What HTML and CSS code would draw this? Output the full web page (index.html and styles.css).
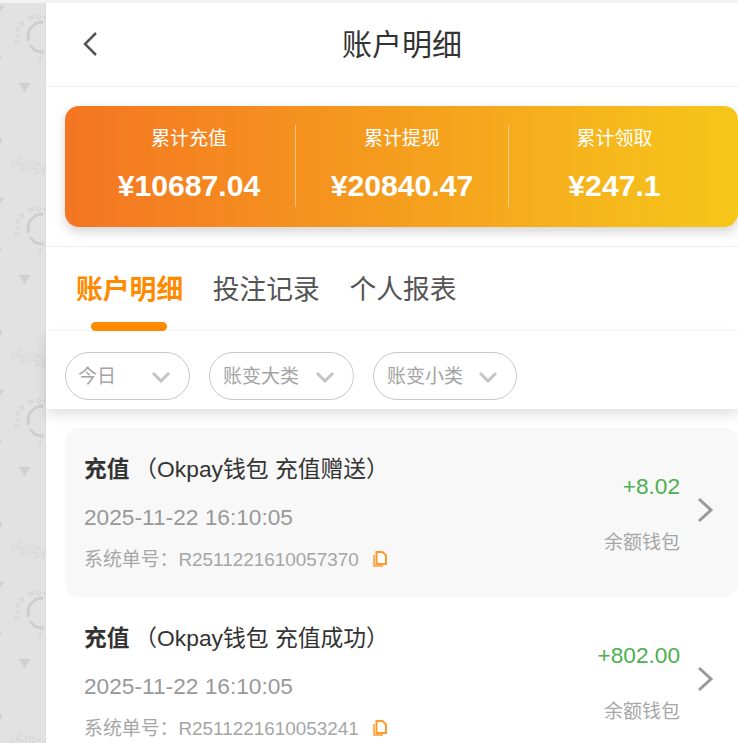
FILE: index.html
```
<!DOCTYPE html>
<html lang="zh-CN">
<head>
<meta charset="utf-8">
<title>账户明细</title>
<link rel="stylesheet" href="styles.css">
</head>
<body>
<div class="topline"></div>
<div class="app">
  <aside class="side">
    <svg class="side-art" width="46" height="740" viewBox="0 0 46 740" aria-hidden="true">
      <defs>
        <pattern id="wm" x="0" y="-3" width="46" height="192" patternUnits="userSpaceOnUse">
          <path class="arc" d="M43 22A15 15 0 0 0 28.500 41M30 45A15 15 0 0 0 44 52"/>
          <path id="ring" class="none" d="M19 44A20 20 0 0 1 46 20"/>
          <text class="club"><textPath href="#ring">CLUB WOR</textPath></text>
          <text class="club" x="38" y="62">T</text>
          <path class="tri" d="M19 83h11l-5.500 10z"/>
          <path class="tri" d="M0 136l3 7h-3z"/>
          <path class="tri" d="M0 55h2l-2 5z"/>
          <path class="tri" d="M0 6h4l-4 6z"/>
          <text class="fifa" transform="translate(10 166) rotate(16) skewX(-12)">FIFA</text>
        </pattern>
      </defs>
      <rect width="46" height="740" fill="url(#wm)"/>
    </svg>
  </aside>
  <main class="panel">
    <header class="head">
      <svg class="back" width="16" height="26" viewBox="0 0 16 26" aria-hidden="true"><path d="M14 2 3 13l11 11"/></svg>
      <h1 class="title">账户明细</h1>
    </header>
    <section class="stats-wrap">
      <div class="stats">
        <div class="stat"><div class="stat-label">累计充值</div><div class="stat-num">¥10687.04</div></div>
        <div class="stat"><div class="stat-label">累计提现</div><div class="stat-num">¥20840.47</div></div>
        <div class="stat"><div class="stat-label">累计领取</div><div class="stat-num">¥247.1</div></div>
      </div>
    </section>
    <nav class="tabs">
      <a class="tab active">账户明细</a>
      <a class="tab">投注记录</a>
      <a class="tab">个人报表</a>
    </nav>
    <div class="filters">
      <div class="pill pill-s"><span>今日</span><svg class="pill-arrow" width="20" height="12" viewBox="0 0 20 12" aria-hidden="true"><path d="M2 2l8 8 8-8"/></svg></div>
      <div class="pill"><span>账变大类</span><svg class="pill-arrow" width="20" height="12" viewBox="0 0 20 12" aria-hidden="true"><path d="M2 2l8 8 8-8"/></svg></div>
      <div class="pill pill-l"><span>账变小类</span><svg class="pill-arrow" width="20" height="12" viewBox="0 0 20 12" aria-hidden="true"><path d="M2 2l8 8 8-8"/></svg></div>
    </div>
    <section class="list">
      <article class="row shaded">
        <div class="info">
          <div class="name"><b>充值</b><span class="desc">（Okpay钱包 充值赠送）</span></div>
          <div class="time">2025-11-22 16:10:05</div>
          <div class="order"><span>系统单号：R2511221610057370</span>
            <svg class="copy" width="14" height="16" viewBox="0 0 14 16" aria-hidden="true"><path class="copy-back" d="M1 4v11h9"/><path class="copy-front" d="M3.500 1h6l3.500 3.500V13H3.500z"/></svg>
          </div>
        </div>
        <div class="money"><div class="amount">+8.02</div><div class="wallet">余额钱包</div></div>
        <svg class="go" width="18" height="26" viewBox="0 0 18 26" aria-hidden="true"><path d="M3 2l12 11L3 24"/></svg>
      </article>
      <article class="row">
        <div class="info">
          <div class="name"><b>充值</b><span class="desc">（Okpay钱包 充值成功）</span></div>
          <div class="time">2025-11-22 16:10:05</div>
          <div class="order"><span>系统单号：R2511221610053241</span>
            <svg class="copy" width="14" height="16" viewBox="0 0 14 16" aria-hidden="true"><path class="copy-back" d="M1 4v11h9"/><path class="copy-front" d="M3.500 1h6l3.500 3.500V13H3.500z"/></svg>
          </div>
        </div>
        <div class="money"><div class="amount">+802.00</div><div class="wallet">余额钱包</div></div>
        <svg class="go" width="18" height="26" viewBox="0 0 18 26" aria-hidden="true"><path d="M3 2l12 11L3 24"/></svg>
      </article>
    </section>
  </main>
</div>
</body>
</html>
```
FILE: styles.css
```
* { box-sizing: border-box; }
html, body { margin: 0; height: 743px; overflow: hidden; background: #fff; }
body { font-family: "Liberation Sans", "Noto Sans CJK SC", sans-serif; color: #333; }

.topline { height: 3px; background: #f2f2f2; }
.app { display: flex; height: 740px; }

.side { flex: 0 0 46px; background: #e2e2e2; border-right: 1px solid #dcdcdc; overflow: hidden; }
.side-art { display: block; }
.arc { fill: none; stroke: #cecece; stroke-width: 3; }
.none { fill: none; }
.club { font-size: 6.500px; font-weight: 700; fill: #d0d0d0; letter-spacing: 1.500px; }
.tri { fill: #d0d0d0; }
.fifa { font-size: 16px; font-weight: 700; font-style: italic; fill: #e8e8e8; stroke: #d2d2d2; stroke-width: .8; letter-spacing: 1px; }

.panel { flex: 1; min-width: 0; background: #fff; }

.head { height: 84px; border-bottom: 1px solid #eee; display: flex; align-items: center; padding: 0 0 1px 36px; }
.back { flex: none; }
.back path { fill: none; stroke: #555; stroke-width: 2.500; }
.title { margin: 2px 0 0 244px; font-size: 30px; line-height: 40px; font-weight: 400; color: #333; white-space: nowrap; }

.stats-wrap { height: 160px; padding: 19px 0 0 19px; border-bottom: 1px solid #eee; }
.stats { height: 121px; padding: 19px 18px; display: flex; border-radius: 14px; background: linear-gradient(90deg, #f47522, #f6c71a); box-shadow: 0 5px 12px rgba(0, 0, 0, .17); }
.stat { flex: 0 0 213px; height: 82px; text-align: center; color: #fff; border-right: 1px solid rgba(255, 255, 255, .45); }
.stat:last-child { flex: 1; border-right: 0; }
.stat-label { font-size: 19px; line-height: 28px; }
.stat-num { margin-top: 15px; font-size: 30.200px; line-height: 36px; font-weight: 700; }

.tabs { height: 84px; padding: 0 0 0 30px; display: flex; gap: 29.500px; border-bottom: 1px solid #f8f8f8; }
.tab { position: relative; font-size: 26.800px; line-height: 36px; padding-top: 25px; color: #555; white-space: nowrap; }
.tab.active { color: #ff8a00; font-weight: 700; }
.tab.active::after { content: ""; position: absolute; left: 15px; top: 75px; width: 76px; height: 9px; border-radius: 5px; background: #ff8a00; }

.filters { height: 78px; padding: 21px 0 0 19px; display: flex; gap: 19px; background: #fff; box-shadow: 0 6px 12px rgba(0, 0, 0, .12); position: relative; }
.pill { width: 145px; height: 48px; border: 1px solid #c9c9c9; border-radius: 24px; display: flex; align-items: center; justify-content: space-between; padding: 0 18px 3px 13px; font-size: 19px; color: #a3a3a3; }
.pill-s { width: 125px; padding-left: 12px; }
.pill-l { width: 144px; }
.pill-arrow { flex: none; margin-top: 4px; }
.pill-arrow path { fill: none; stroke: #c4c4c4; stroke-width: 3; }

.list { padding: 19px 0 0 19px; }
.row { height: 169px; padding: 0 24px 0 19px; display: flex; align-items: flex-start; border-radius: 14px; }
.shaded { background: #f8f8f8; }
.info { flex: 1; min-width: 0; padding-top: 25px; }
.name { font-size: 22.800px; line-height: 32px; color: #333; white-space: nowrap; }
.name b { font-weight: 700; font-size: 22.670px; }
.desc { margin-left: 5px; }
.time { margin-top: 16px; font-size: 22.700px; line-height: 32px; color: #999; }
.order { margin-top: 11px; height: 26px; display: flex; align-items: center; gap: 14px; font-size: 18.900px; color: #a6a6a6; white-space: nowrap; }
.copy { flex: none; margin-top: 4px; }
.copy-back { fill: none; stroke: #ff9a2e; stroke-width: 1.500; }
.copy-front { fill: #fff; stroke: #ff9a2e; stroke-width: 2; }
.money { text-align: right; padding-top: 42px; }
.amount { font-size: 22.670px; line-height: 32px; color: #4caf50; }
.wallet { margin-top: 28px; font-size: 19px; line-height: 26px; color: #a6a6a6; }
.go { flex: none; margin: 69px 0 0 16px; }
.go path { fill: none; stroke: #999; stroke-width: 3; }
```
